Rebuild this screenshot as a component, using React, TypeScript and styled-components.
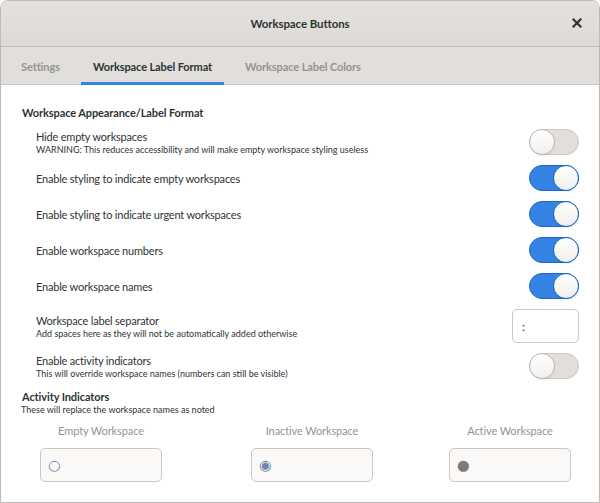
import React from "react";
import styled, { createGlobalStyle } from "styled-components";

const GlobalStyle = createGlobalStyle`
  html, body { margin: 0; padding: 0; background: #ffffff; }
  body {
    font-family: Lato, "Noto Sans", "DejaVu Sans", sans-serif;
    color: #2e3436;
    -webkit-font-smoothing: antialiased;
  }
  * { box-sizing: border-box; }
`;

const Window = styled.div`
  width: 600px;
  height: 503px;
  display: flex;
  flex-direction: column;
  border: 1px solid #bfbab4;
  border-top-left-radius: 8px;
  border-top-right-radius: 8px;
  overflow: hidden;
  background: #ffffff;
`;

const HeaderBar = styled.header`
  height: 46px;
  flex: none;
  display: grid;
  grid-template-columns: 40px 1fr 40px;
  align-items: center;
  background: linear-gradient(#e3e0dd, #dedbd7);
  border-bottom: 1px solid #c3beb8;
  padding-bottom: 1px;
`;

const Title = styled.h1`
  grid-column: 2;
  margin: 0;
  text-align: center;
  font-size: 11.5px;
  font-weight: 700;
  color: #2e3436;
  letter-spacing: -0.1px;
`;

const CloseButton = styled.button`
  grid-column: 3;
  justify-self: end;
  margin-right: 10px;
  width: 24px;
  height: 24px;
  border: none;
  background: transparent;
  padding: 0;
  display: flex;
  align-items: center;
  justify-content: center;
  color: #2e3436;
`;

const TabBar = styled.nav`
  height: 38px;
  flex: none;
  display: flex;
  padding-left: 8px;
  gap: 9px;
  background: #e1dedb;
  box-shadow: inset 0 -1px 0 #cdc7c2;
`;

const Tab = styled.div<{ $active?: boolean }>`
  display: flex;
  align-items: center;
  padding: 1px 12px 0;
  font-size: 11px;
  font-weight: 700;
  letter-spacing: -0.1px;
  color: ${(p) => (p.$active ? "#2e3436" : "#929595")};
  box-shadow: ${(p) => (p.$active ? "inset 0 -3px 0 #3584e4" : "none")};
`;

const Content = styled.main`
  flex: 1;
  background: #ffffff;
  padding: 20px 20px 0 20px;
  display: flex;
  flex-direction: column;
`;

const SectionTitle = styled.h2<{ $top?: number }>`
  margin: ${(p) => p.$top ?? 0}px 0 0 1px;
  font-size: 11px;
  line-height: 15px;
  font-weight: 700;
  letter-spacing: -0.1px;
  color: #2e3436;
`;

const SectionNote = styled.div`
  font-size: 9px;
  line-height: 11px;
  color: #2e3436;
`;

const Rows = styled.div`
  margin-top: 9px;
  padding-left: 15px;
  display: flex;
  flex-direction: column;
  gap: 10px;
`;

const Row = styled.div`
  min-height: 26px;
  display: flex;
  align-items: center;
  justify-content: space-between;
`;

const LabelBlock = styled.div`
  display: flex;
  flex-direction: column;
`;

const RowTitle = styled.div`
  font-size: 11px;
  line-height: 15px;
  letter-spacing: -0.2px;
  color: #2e3436;
`;

const RowSub = styled.div`
  font-size: 9px;
  line-height: 11px;
  color: #2e3436;
`;

const Track = styled.div<{ $on?: boolean }>`
  width: 50px;
  height: 26px;
  flex: none;
  border-radius: 13px;
  border: 1px solid ${(p) => (p.$on ? "#1b6acb" : "#cdc7c2")};
  background: ${(p) => (p.$on ? "#3584e4" : "#e1dedb")};
  display: flex;
  justify-content: ${(p) => (p.$on ? "flex-end" : "flex-start")};
  align-items: center;
`;

const Thumb = styled.div<{ $on?: boolean }>`
  width: 26px;
  height: 26px;
  margin: -1px;
  border-radius: 50%;
  border: 1px solid ${(p) => (p.$on ? "#1b6acb" : "#bfb8b1")};
  background: linear-gradient(#ffffff, #f1efed);
  box-shadow: 0 1px 1px rgba(0, 0, 0, 0.08);
`;

const Switch = ({ on }: { on?: boolean }) => (
  <Track $on={on}>
    <Thumb $on={on} />
  </Track>
);

const Entry = styled.div`
  width: 67px;
  height: 34px;
  flex: none;
  border: 1px solid #cdc7c2;
  border-radius: 5px;
  background: #ffffff;
  display: flex;
  align-items: center;
  padding-left: 9px;
  font-size: 12px;
  color: #2e3436;
`;

const Indicators = styled.div`
  margin-top: 9px;
  margin-left: 19px;
  display: grid;
  grid-template-columns: 211px 198px 122px;
`;

const IndicatorColumn = styled.div`
  width: 122px;
  display: flex;
  flex-direction: column;
  align-items: center;
  gap: 10px;
`;

const IndicatorLabel = styled.div`
  font-size: 11px;
  line-height: 14px;
  letter-spacing: -0.1px;
  color: #929595;
  white-space: nowrap;
`;

const IndicatorBox = styled.div`
  width: 122px;
  height: 34px;
  border: 1px solid #cdc7c2;
  border-radius: 5px;
  background: #faf9f8;
  display: flex;
  align-items: center;
  padding-left: 7px;
`;

const Glyph = styled.span<{ $color: string }>`
  font-family: "DejaVu Sans", sans-serif;
  font-size: 14.5px;
  line-height: 1;
  color: ${(p) => p.$color};
`;

const rows: { title: string; sub?: string; on: boolean }[] = [
  {
    title: "Hide empty workspaces",
    sub: "WARNING: This reduces accessibility and will make empty workspace styling useless",
    on: false,
  },
  { title: "Enable styling to indicate empty workspaces", on: true },
  { title: "Enable styling to indicate urgent workspaces", on: true },
  { title: "Enable workspace numbers", on: true },
  { title: "Enable workspace names", on: true },
];

const indicators = [
  { label: "Empty Workspace", glyph: "○", color: "#6f86ad" },
  { label: "Inactive Workspace", glyph: "◉", color: "#6f86ad" },
  { label: "Active Workspace", glyph: "●", color: "#7b7b7b" },
];

export default function App() {
  return (
    <>
      <GlobalStyle />
      <Window>
        <HeaderBar>
          <Title>Workspace Buttons</Title>
          <CloseButton aria-label="Close">
            <svg width="10" height="10" viewBox="0 0 10 10">
              <path d="M1.5 1.5 L8.5 8.5 M8.5 1.5 L1.5 8.5" stroke="#2e3436" strokeWidth="2.2" strokeLinecap="square" />
            </svg>
          </CloseButton>
        </HeaderBar>
        <TabBar>
          <Tab>Settings</Tab>
          <Tab $active>Workspace Label Format</Tab>
          <Tab>Workspace Label Colors</Tab>
        </TabBar>
        <Content>
          <SectionTitle>Workspace Appearance/Label Format</SectionTitle>
          <Rows>
            {rows.map((r) => (
              <Row key={r.title}>
                <LabelBlock>
                  <RowTitle>{r.title}</RowTitle>
                  {r.sub && <RowSub>{r.sub}</RowSub>}
                </LabelBlock>
                <Switch on={r.on} />
              </Row>
            ))}
            <Row>
              <LabelBlock>
                <RowTitle>Workspace label separator</RowTitle>
                <RowSub>Add spaces here as they will not be automatically added otherwise</RowSub>
              </LabelBlock>
              <Entry>:</Entry>
            </Row>
            <Row>
              <LabelBlock>
                <RowTitle>Enable activity indicators</RowTitle>
                <RowSub>This will override workspace names (numbers can still be visible)</RowSub>
              </LabelBlock>
              <Switch on={false} />
            </Row>
          </Rows>
          <SectionTitle $top={10}>Activity Indicators</SectionTitle>
          <SectionNote>These will replace the workspace names as noted</SectionNote>
          <Indicators>
            {indicators.map((i) => (
              <IndicatorColumn key={i.label}>
                <IndicatorLabel>{i.label}</IndicatorLabel>
                <IndicatorBox>
                  <Glyph $color={i.color}>{i.glyph}</Glyph>
                </IndicatorBox>
              </IndicatorColumn>
            ))}
          </Indicators>
        </Content>
      </Window>
    </>
  );
}
